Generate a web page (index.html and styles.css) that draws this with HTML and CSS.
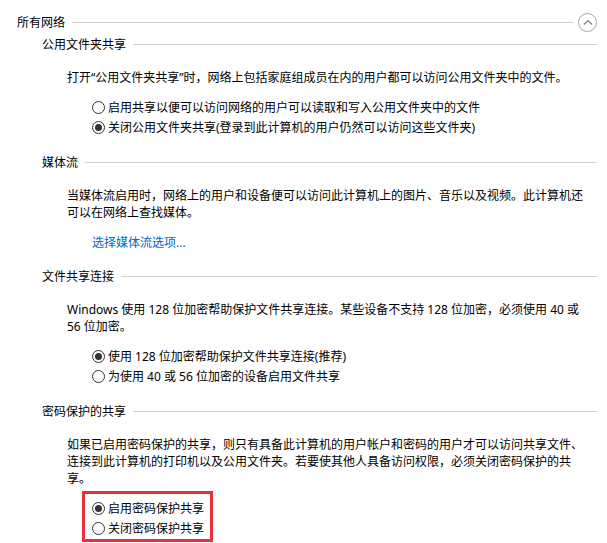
FILE: index.html
```html
<!DOCTYPE html>
<html lang="zh-CN">
<head>
  <meta charset="UTF-8">
  <title>高级共享设置 - 所有网络</title>
  <link rel="stylesheet" href="styles.css">
</head>
<body>
  <div class="panel">
    <div class="group-head">
      <span class="group-title">所有网络</span>
      <span class="rule"></span>
      <span class="collapse">
        <svg width="10" height="6" viewBox="0 0 10 6"><path d="M1 5.5 L5 1.5 L9 5.5" fill="none" stroke="#7a7a7a" stroke-width="1.1"/></svg>
      </span>
    </div>

    <section class="section first">
      <div class="section-head"><span>公用文件夹共享</span><span class="rule"></span></div>
      <p class="desc">打开“公用文件夹共享”时，网络上包括家庭组成员在内的用户都可以访问公用文件夹中的文件。</p>
      <div class="options">
        <label class="option"><span class="radio"></span>启用共享以便可以访问网络的用户可以读取和写入公用文件夹中的文件</label>
        <label class="option"><span class="radio checked"></span>关闭公用文件夹共享(登录到此计算机的用户仍然可以访问这些文件夹)</label>
      </div>
    </section>

    <section class="section">
      <div class="section-head"><span>媒体流</span><span class="rule"></span></div>
      <p class="desc">当媒体流启用时，网络上的用户和设备便可以访问此计算机上的图片、音乐以及视频。此计算机还<br>可以在网络上查找媒体。</p>
      <a class="link" href="#">选择媒体流选项...</a>
    </section>

    <section class="section">
      <div class="section-head"><span>文件共享连接</span><span class="rule"></span></div>
      <p class="desc">Windows 使用 128 位加密帮助保护文件共享连接。某些设备不支持 128 位加密，必须使用 40 或<br>56 位加密。</p>
      <div class="options">
        <label class="option"><span class="radio checked"></span>使用 128 位加密帮助保护文件共享连接(推荐)</label>
        <label class="option"><span class="radio"></span>为使用 40 或 56 位加密的设备启用文件共享</label>
      </div>
    </section>

    <section class="section">
      <div class="section-head"><span>密码保护的共享</span><span class="rule"></span></div>
      <p class="desc">如果已启用密码保护的共享，则只有具备此计算机的用户帐户和密码的用户才可以访问共享文件、<br>连接到此计算机的打印机以及公用文件夹。若要使其他人具备访问权限，必须关闭密码保护的共<br>享。</p>
      <div class="options marked">
        <label class="option"><span class="radio checked"></span>启用密码保护共享</label>
        <label class="option"><span class="radio"></span>关闭密码保护共享</label>
      </div>
    </section>
  </div>
</body>
</html>
```

FILE: styles.css
```css
:root {
  --text: #000000;
  --rule: #d2d2d2;
  --link: #0066cc;
  --radio: #333333;
  --mark: #e8303a;
}
body {
  margin: 0;
  background-color: #ffffff;
  color: var(--text);
  font-family: "Noto Sans", "Noto Sans CJK SC", sans-serif;
  font-size: 12px;
}
.panel {
  padding: 12px 10px 0 17px;
}
.group-head {
  display: flex;
  align-items: center;
  height: 20px;
}
.group-title {
  line-height: 17px;
}
.rule {
  flex: 1;
  height: 1px;
  background-color: var(--rule);
  margin-left: 7px;
}
.collapse {
  width: 19px;
  height: 19px;
  box-sizing: border-box;
  border: 1px solid #a3a3a3;
  border-radius: 50%;
  margin-left: 5px;
  display: flex;
  align-items: center;
  justify-content: center;
}
.collapse svg {
  margin-top: -1px;
}
.section {
  padding-left: 25px;
  margin-top: 17px;
}
.section.first {
  margin-top: 4px;
}
.section-head {
  display: flex;
  align-items: center;
  height: 17px;
  line-height: 17px;
}
.desc {
  margin: 16px 0 0 25px;
  line-height: 17px;
  white-space: nowrap;
}
.link {
  display: block;
  margin: 13px 0 0 50px;
  line-height: 17px;
  color: var(--link);
  text-decoration: none;
}
.options {
  margin: 11px 0 0 50px;
}
.option {
  display: flex;
  align-items: center;
  height: 20px;
  gap: 3px;
  white-space: nowrap;
}
.radio {
  width: 13px;
  height: 13px;
  box-sizing: border-box;
  border: 1px solid var(--radio);
  border-radius: 50%;
  display: flex;
  align-items: center;
  justify-content: center;
  flex-shrink: 0;
}
.radio.checked::before {
  content: '';
  width: 7px;
  height: 7px;
  border-radius: 50%;
  background-color: var(--radio);
}
.options.marked {
  width: fit-content;
  margin: 4px 0 0 40px;
  padding: 4px 6px 1px 7px;
  border: 3px solid var(--mark);
}
```
